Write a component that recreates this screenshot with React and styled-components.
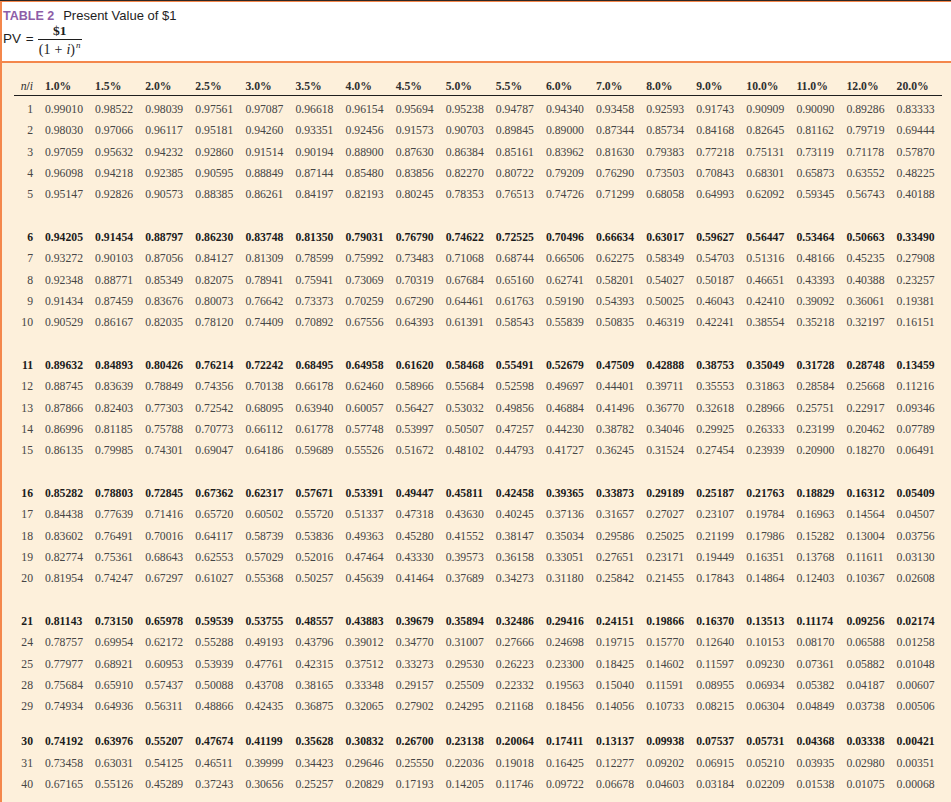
import React from 'react'
import styled, { createGlobalStyle } from 'styled-components'

const rates = [1, 1.5, 2, 2.5, 3, 3.5, 4, 4.5, 5, 5.5, 6, 7, 8, 9, 10, 11, 12, 20]

const groups = [
   [1, 2, 3, 4, 5],
   [6, 7, 8, 9, 10],
   [11, 12, 13, 14, 15],
   [16, 17, 18, 19, 20],
   [21, 24, 25, 28, 29],
   [30, 31, 40],
]

const pv = (rate, n) => Math.pow(1 + rate / 100, -n).toFixed(5)

function App() {
   return (
      <>
         <GlobalStyle />
         <Frame>
            <Banner>
               <Title>
                  <TableNo>TABLE 2</TableNo>
                  Present Value of $1
               </Title>
               <PvLine>
                  <PvLabel>PV =</PvLabel>
                  <Fraction>
                     <Numer>$1</Numer>
                     <Bar />
                     <Denom>
                        (1<Plus>+</Plus><i>i</i>)<sup><i>n</i></sup>
                     </Denom>
                  </Fraction>
               </PvLine>
            </Banner>
            <Sheet>
               <HeadRow>
                  <Label><i>n</i>/<i>i</i></Label>
                  {rates.map(r => (
                     <Cell key={r}>{r.toFixed(1)}%</Cell>
                  ))}
               </HeadRow>
               {groups.map((group, g) => (
                  <React.Fragment key={g}>
                     {g > 0 && <Spacer short={g === groups.length - 1} />}
                     {group.map((n, k) => (
                        <Row key={n} bold={g > 0 && k === 0}>
                           <Label>{n}</Label>
                           {rates.map(r => (
                              <Cell key={r}>{pv(r, n)}</Cell>
                           ))}
                        </Row>
                     ))}
                  </React.Fragment>
               ))}
            </Sheet>
         </Frame>
      </>
   )
}

const GlobalStyle = createGlobalStyle`
   html, body {
      margin: 0;
      padding: 0;
      background: #ffffff;
   }
   body {
      overflow: hidden;
   }
`

const Frame = styled.div`
   width: 951px;
   height: 802px;
   overflow: hidden;
   border-top: 1px solid #2e2622;
   box-sizing: border-box;
`

const Banner = styled.div`
   height: 62px;
   box-sizing: border-box;
   background: #ffffff;
   border-top: 1px solid #f4874b;
   border-left: 2px solid #f4874b;
   border-bottom: 2px solid #f4874b;
   padding: 7px 0 0 1px;
   font-family: "Liberation Sans", Arial, sans-serif;
   color: #1e1e1e;
`

const Title = styled.div`
   font-size: 13px;
   line-height: 14px;
   white-space: nowrap;
`

const TableNo = styled.span`
   color: #8d5da7;
   font-weight: bold;
   font-size: 12.5px;
   margin-right: 9px;
`

const PvLine = styled.div`
   display: flex;
   align-items: center;
`

const PvLabel = styled.span`
   font-size: 13.5px;
   line-height: 15px;
   margin-bottom: 4px;
   margin-right: 4px;
   word-spacing: 1px;
`

const Fraction = styled.div`
   display: flex;
   flex-direction: column;
   align-items: center;
   width: 44px;
   font-family: "Liberation Serif", "Times New Roman", serif;
   color: #1e1e1e;
`

const Numer = styled.div`
   font-weight: bold;
   font-size: 13.5px;
   line-height: 15px;
   margin-bottom: 1px;
`

const Bar = styled.div`
   width: 44px;
   height: 1px;
   background: #1e1e1e;
`

const Denom = styled.div`
   font-size: 14px;
   line-height: 15px;
   margin-top: 2px;
   white-space: nowrap;

   sup {
      font-size: 9px;
      vertical-align: 6px;
      line-height: 0;
      margin-left: 1px;
   }
`

const Plus = styled.span`
   margin: 0 4px;
`

const Sheet = styled.div`
   height: 740px;
   box-sizing: border-box;
   background: #fdf0db;
   border-left: 2px solid #f4874b;
   padding: 16px 0 0 12px;
   font-family: "Liberation Serif", "Times New Roman", serif;
   font-size: 11.7px;
`

const columns = `31px repeat(17, 50.1px) 45px`

const HeadRow = styled.div`
   display: grid;
   grid-template-columns: ${columns};
   height: 16px;
   line-height: 16px;
   border-bottom: 1px solid #1f1f1f;
   margin-bottom: 3px;
   width: 928px;
   font-weight: bold;
   color: #2f2f2f;

   i {
      font-weight: normal;
   }
`

const Row = styled.div`
   display: grid;
   grid-template-columns: ${columns};
   height: 21.33px;
   line-height: 21.33px;
   width: 928px;
   font-weight: ${props => (props.bold ? 'bold' : 'normal')};
   color: ${props => (props.bold ? '#1c1c1c' : '#454545')};
`

const Label = styled.div`
   text-align: right;
   padding-right: 12px;
   white-space: nowrap;
`

const Cell = styled.div`
   white-space: nowrap;
`

const Spacer = styled.div`
   height: ${props => (props.short ? '13.7px' : '21.33px')};
`

export default App
